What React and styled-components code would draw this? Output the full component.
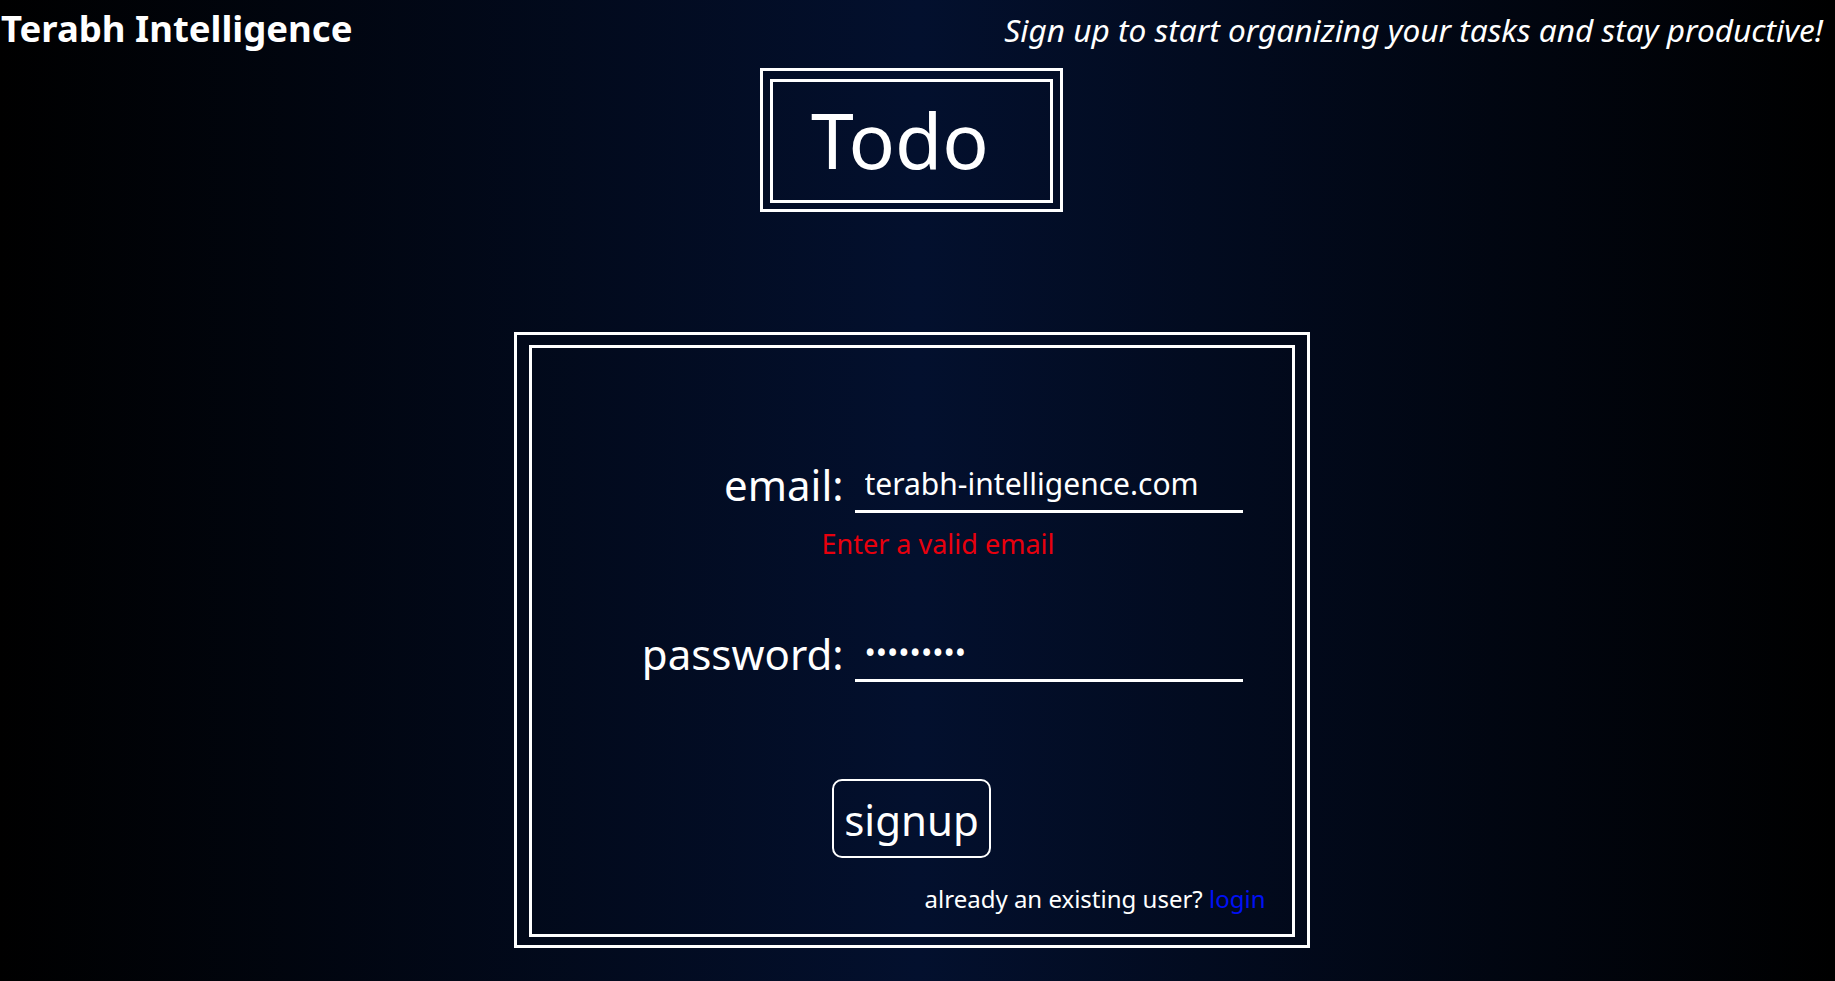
import * as React from 'react'
import styled, { createGlobalStyle } from 'styled-components'

const GlobalStyle = createGlobalStyle`
  * {
    box-sizing: border-box;
  }
  body {
    margin: 0;
    background: #000;
  }
`

const Page = styled.div`
  min-height: 100vh;
  padding: 3px 12px 0 0;
  background: linear-gradient(90deg, #000 0%, #03102e 50%, #000 100%);
  color: #fff;
  font-family: 'Noto Sans', 'Open Sans', sans-serif;
`

const Header = styled.header`
  display: flex;
  justify-content: space-between;
  align-items: baseline;
  padding-left: 1px;
`

const Brand = styled.div`
  font-size: 36.5px;
  font-weight: 700;
`

const Tagline = styled.div`
  font-size: 31.6px;
  font-style: italic;
`

const TitleFrame = styled.div`
  width: 303px;
  margin: 15px auto 0;
  padding: 8px 7px 6px;
  border: 3px solid #fff;
`

const Title = styled.h1`
  height: 124px;
  margin: 0;
  padding: 5px 0 0 38px;
  border: 3px solid #fff;
  font-size: 77px;
  font-weight: 400;
  line-height: normal;
`

const FormFrame = styled.div`
  width: 796px;
  margin: 120px auto 0;
  padding: 10px 12px 8px;
  border: 3px solid #fff;
`

const Form = styled.form`
  display: flex;
  flex-direction: column;
  border: 3px solid #fff;
  padding: 108px 0 19px;
`

const Fields = styled.div`
  display: grid;
  grid-template-columns: 1fr 388px;
  column-gap: 11px;
  align-items: end;
  padding-right: 49px;
  margin-top: ${p => p.$gap || 0}px;
`

const Label = styled.label`
  font-size: 42px;
  line-height: normal;
  text-align: right;
`

const Input = styled.input`
  width: 388px;
  padding: 0 10px 6px;
  background: transparent;
  border: none;
  border-bottom: 3px solid #fff;
  color: #fff;
  font-family: 'Noto Sans', sans-serif;
  font-size: 30px;
  line-height: normal;
  outline: none;
`

const ErrorText = styled.div`
  grid-column: 1 / -1;
  margin-top: 12px;
  padding-left: 290px;
  color: #e8000d;
  font-size: 27px;
  line-height: normal;
`

const SubmitButton = styled.button`
  align-self: center;
  margin-top: 97px;
  padding: 10px 10px 8px;
  background: transparent;
  border: 2px solid #fff;
  border-radius: 10px;
  color: #fff;
  font-family: 'Noto Sans', sans-serif;
  font-size: 42px;
  line-height: normal;
  cursor: pointer;
`

const Switch = styled.p`
  margin: 24px 0 0;
  padding-right: 26px;
  text-align: right;
  font-size: 24px;
  line-height: normal;
`

const SwitchLink = styled.a`
  color: #0010f5;
  text-decoration: none;
`

export default function App() {
  return (
    <>
      <GlobalStyle />
      <Page>
        <Header>
          <Brand>Terabh Intelligence</Brand>
          <Tagline>Sign up to start organizing your tasks and stay productive!</Tagline>
        </Header>

        <TitleFrame>
          <Title>Todo</Title>
        </TitleFrame>

        <FormFrame>
          <Form onSubmit={e => e.preventDefault()}>
            <Fields>
              <Label htmlFor="email">email:</Label>
              <Input id="email" type="text" defaultValue="terabh-intelligence.com" />
              <ErrorText>Enter a valid email</ErrorText>
            </Fields>
            <Fields $gap={63}>
              <Label htmlFor="password">password:</Label>
              <Input id="password" type="password" defaultValue="123456789" />
            </Fields>
            <SubmitButton type="submit">signup</SubmitButton>
            <Switch>
              already an existing user? <SwitchLink href="#login">login</SwitchLink>
            </Switch>
          </Form>
        </FormFrame>
      </Page>
    </>
  )
}
